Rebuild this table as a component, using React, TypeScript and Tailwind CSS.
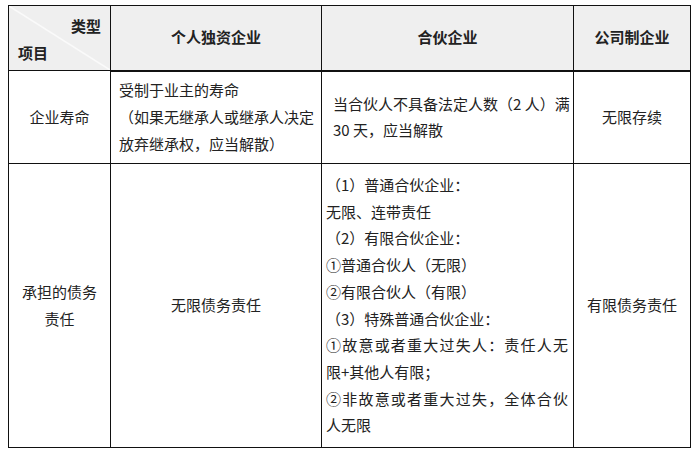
const font = {
  fontFamily: '"Noto Sans CJK SC", "Noto Sans", sans-serif',
};

function J({ children }: { children: React.ReactNode }) {
  // wrapped line, stretched to the full cell width like the original
  return <div className="text-justify [text-align-last:justify]">{children}</div>;
}

export default function App() {
  return (
    <div className="w-[700px] h-[450px] bg-white pl-[8px] pt-[5px] text-[#222]" style={font}>
      <table className="border-collapse table-fixed w-[682px] text-[15px] leading-[26.7px]">
        <colgroup>
          <col className="w-[102px]" />
          <col className="w-[211px]" />
          <col className="w-[252px]" />
          <col className="w-[117px]" />
        </colgroup>
        <thead>
          <tr className="h-[64px] bg-[#efefef]">
            <th className="relative border border-[#111] p-0 font-normal">
              <svg className="absolute inset-0 w-full h-full" preserveAspectRatio="none" viewBox="0 0 100 100">
                <line x1="0" y1="0" x2="100" y2="100" stroke="#fafafa" strokeWidth="1.5" vectorEffect="non-scaling-stroke" />
              </svg>
              <div className="relative flex flex-col h-[64px] px-[9px] pt-[7px] pb-[6px] font-bold">
                <div className="text-right">类型</div>
                <div className="mt-auto text-left">项目</div>
              </div>
            </th>
            <th className="border border-[#111] border-b-2 font-bold">个人独资企业</th>
            <th className="border border-[#111] border-b-2 font-bold">合伙企业</th>
            <th className="border border-[#111] border-b-2 font-bold">公司制企业</th>
          </tr>
        </thead>
        <tbody>
          <tr className="h-[93px]">
            <td className="border border-[#111] text-center">企业寿命</td>
            <td className="border border-[#111] pl-[8px] pr-[6px] align-middle whitespace-nowrap">
              <div>受制于业主的寿命</div>
              <div>（如果无继承人或继承人决定</div>
              <div>放弃继承权，应当解散）</div>
            </td>
            <td className="border border-[#111] pl-[11px] pr-[10px] whitespace-nowrap">
              <J>当合伙人不具备法定人数（2 人）满</J>
              <div>30 天，应当解散</div>
            </td>
            <td className="border border-[#111] text-center">无限存续</td>
          </tr>
          <tr className="h-[284px]">
            <td className="border border-[#111] text-center">
              <div>承担的债务</div>
              <div>责任</div>
            </td>
            <td className="border border-[#111] text-center">无限债务责任</td>
            <td className="border border-[#111] pl-[4px] pr-[5px] whitespace-nowrap">
              <div>（1）普通合伙企业：</div>
              <div>无限、连带责任</div>
              <div>（2）有限合伙企业：</div>
              <div>①普通合伙人（无限）</div>
              <div>②有限合伙人（有限）</div>
              <div>（3）特殊普通合伙企业：</div>
              <J>①故意或者重大过失人：责任人无</J>
              <div>限+其他人有限；</div>
              <J>②非故意或者重大过失，全体合伙</J>
              <div>人无限</div>
            </td>
            <td className="border border-[#111] text-center">有限债务责任</td>
          </tr>
        </tbody>
      </table>
    </div>
  );
}
